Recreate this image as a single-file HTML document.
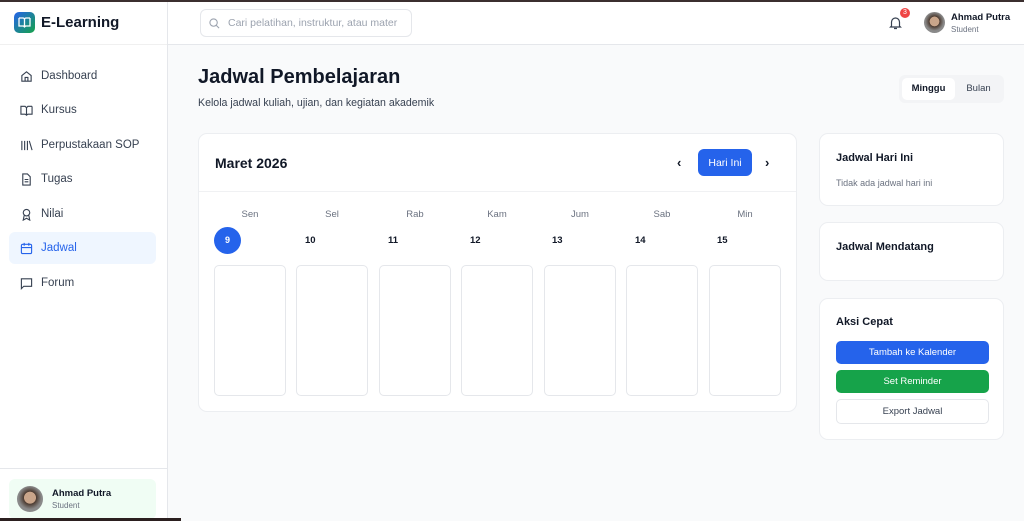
<!DOCTYPE html><html><head><style>
*{box-sizing:border-box;margin:0;padding:0}
body{width:1024px;height:521px;overflow:hidden;font-family:"Liberation Sans",sans-serif;background:#f9fafb;color:#111827;position:relative}
.top{position:absolute;left:0;top:0;width:1024px;height:2px;background:#3b2f2f}
.side{position:absolute;left:0;top:0;width:168px;height:521px;background:#fff;border-right:1px solid #e5e7eb}
.logo{height:45px;border-bottom:1px solid #f0f0f0;display:flex;align-items:center;padding-left:14px;font-weight:bold;font-size:15px}
.logo .ic{width:21px;height:21px;border-radius:5px;background:linear-gradient(135deg,#2563eb,#16a34a);margin-right:6px;display:flex;align-items:center;justify-content:center}
.nav{position:absolute;left:9px;width:147px;height:32px;display:flex;align-items:center;padding-left:11px;font-size:11.5px;color:#374151;border-radius:6px}
.nav svg{margin-right:8px}
.nav.act{background:#eff6ff;color:#2563eb}
.user{position:absolute;left:9px;top:479px;width:147px;height:40px;background:#f0fdf4;border-radius:6px;display:flex;align-items:center;padding-left:8px}
.av{width:26px;height:26px;border-radius:50%;background:radial-gradient(circle at 50% 45%,#c9a58a 30%,#4b3a30 32%,#8a8a8a 60%);margin-right:9px}
.bot{position:absolute;left:0;top:518px;width:181px;height:3px;background:#2b1f1f}
.hdr{position:absolute;left:168px;top:2px;width:856px;height:43px;background:#fff;border-bottom:1px solid #e5e7eb}
.search{position:absolute;left:32px;top:7px;width:212px;height:28px;border:1px solid #e5e7eb;border-radius:6px;font-size:10.5px;color:#9ca3af;display:flex;align-items:center;padding-left:8px}
.card{position:absolute;background:#fff;border:1px solid #eceef1;border-radius:9px}
.wd{position:absolute;top:209px;font-size:9.5px;color:#6b7280;width:72px;text-align:center}
.dn{position:absolute;top:235px;font-size:9.5px;font-weight:bold}
.cell{position:absolute;top:265px;width:72px;height:131px;border:1px solid #e5e7eb;border-radius:5px;background:#fff}
.btn{position:absolute;left:16px;width:153px;height:23px;border-radius:5px;font-size:9.5px;display:flex;align-items:center;justify-content:center;color:#fff}
</style></head><body>
<div class="side">
 <div class="logo"><div class="ic"><svg width="13" height="11" viewBox="0 0 13 11" fill="none" stroke="#fff" stroke-width="1.3"><path d="M1 1h4a1.5 1.5 0 011.5 1.5V10 M12 1H8a1.5 1.5 0 00-1.5 1.5 M1 1v8h4.5l1 1 1-1H12V1"/></svg></div>E-Learning</div>
 <div class="nav" style="top:60px"><svg width="13" height="13" viewBox="0 0 14 14" fill="none" stroke="#374151" stroke-width="1.2"><path d="M2 6l5-4 5 4v6H2z M5.5 12V8h3v4"/></svg>Dashboard</div>
 <div class="nav" style="top:94px"><svg width="13" height="13" viewBox="0 0 14 14" fill="none" stroke="#374151" stroke-width="1.2"><path d="M1 2.5h4.5L7 4v8l-1.5-1H1z M13 2.5H8.5L7 4 M13 2.5V11H8.5L7 12"/></svg>Kursus</div>
 <div class="nav" style="top:129px"><svg width="13" height="13" viewBox="0 0 14 14" fill="none" stroke="#374151" stroke-width="1.2"><path d="M2 2v10 M5 2v10 M8 2v10 M10 2l3 10"/></svg>Perpustakaan SOP</div>
 <div class="nav" style="top:163px"><svg width="13" height="13" viewBox="0 0 14 14" fill="none" stroke="#374151" stroke-width="1.2"><path d="M3 1h5l3 3v9H3z M5 7h4 M5 9.5h4"/></svg>Tugas</div>
 <div class="nav" style="top:198px"><svg width="13" height="13" viewBox="0 0 14 14" fill="none" stroke="#374151" stroke-width="1.2"><circle cx="7" cy="5" r="3.5"/><path d="M4.5 8l-1 5 3.5-2 3.5 2-1-5"/></svg>Nilai</div>
 <div class="nav act" style="top:232px"><svg width="13" height="13" viewBox="0 0 14 14" fill="none" stroke="#2563eb" stroke-width="1.2"><rect x="1.5" y="2.5" width="11" height="10" rx="1.5"/><path d="M1.5 6h11 M4.5 1v3 M9.5 1v3"/></svg>Jadwal</div>
 <div class="nav" style="top:267px"><svg width="13" height="13" viewBox="0 0 14 14" fill="none" stroke="#374151" stroke-width="1.2"><path d="M1.5 2h11v8H4l-2.5 2.5z"/></svg>Forum</div>
 <div style="position:absolute;left:0;top:468px;width:167px;border-top:1px solid #e5e7eb"></div>
 <div class="user"><div class="av"></div><div><div style="font-size:9.5px;font-weight:bold">Ahmad Putra</div><div style="font-size:8px;color:#6b7280;margin-top:2px">Student</div></div></div>
</div>
<div class="bot"></div>
<div class="hdr">
 <div class="search"><svg width="11" height="11" viewBox="0 0 12 12" fill="none" stroke="#9ca3af" stroke-width="1.2"><circle cx="5" cy="5" r="4"/><path d="M8 8l3 3"/></svg><span style="margin-left:8px">Cari pelatihan, instruktur, atau mater</span></div>
 <svg style="position:absolute;left:721px;top:14px" width="13" height="14" viewBox="0 0 13 14" fill="none" stroke="#374151" stroke-width="1.2"><path d="M2.5 10V6a4 4 0 018 0v4l1 1h-10z M5 12.5h3"/></svg>
 <div style="position:absolute;left:732px;top:6px;width:10px;height:10px;border-radius:50%;background:#ef4444;color:#fff;font-size:7px;text-align:center;line-height:10px">3</div>
 <div class="av" style="position:absolute;left:756px;top:10px;width:21px;height:21px"></div>
 <div style="position:absolute;left:783px;top:10px;font-size:9.5px;font-weight:bold">Ahmad Putra</div>
 <div style="position:absolute;left:783px;top:23px;font-size:8px;color:#6b7280">Student</div>
</div>
<div class="top"></div>
<div style="position:absolute;left:198px;top:66px;font-size:20px;font-weight:bold">Jadwal Pembelajaran</div>
<div style="position:absolute;left:198px;top:97px;font-size:10.6px;color:#374151">Kelola jadwal kuliah, ujian, dan kegiatan akademik</div>
<div style="position:absolute;left:899px;top:75px;width:105px;height:28px;background:#f3f4f6;border-radius:6px">
 <div style="position:absolute;left:3px;top:3px;width:53px;height:22px;background:#fff;border-radius:5px;font-size:9.5px;text-align:center;line-height:22px;font-weight:bold">Minggu</div>
 <div style="position:absolute;left:56px;top:3px;width:47px;height:22px;font-size:9.5px;text-align:center;line-height:22px;color:#374151">Bulan</div>
</div>
<div class="card" style="left:198px;top:133px;width:599px;height:279px">
 <div style="position:absolute;left:16px;top:21px;font-size:14px;font-weight:bold">Maret 2026</div>
 <div style="position:absolute;left:478px;top:21px;font-size:13px;font-weight:bold">‹</div>
 <div style="position:absolute;left:499px;top:15px;width:54px;height:27px;background:#2563eb;border-radius:6px;color:#fff;font-size:10.5px;display:flex;align-items:center;justify-content:center">Hari Ini</div>
 <div style="position:absolute;left:566px;top:21px;font-size:13px;font-weight:bold">›</div>
 <div style="position:absolute;left:0;top:57px;width:597px;border-top:1px solid #f0f1f3"></div>
</div>
<div class="wd" style="left:214px">Sen</div><div class="wd" style="left:296px">Sel</div><div class="wd" style="left:379px">Rab</div><div class="wd" style="left:461px">Kam</div><div class="wd" style="left:544px">Jum</div><div class="wd" style="left:626px">Sab</div><div class="wd" style="left:709px">Min</div>
<div style="position:absolute;left:214px;top:227px;width:27px;height:27px;border-radius:50%;background:#2563eb;color:#fff;font-size:9px;font-weight:bold;text-align:center;line-height:27px">9</div>
<div class="dn" style="left:305px">10</div><div class="dn" style="left:388px">11</div><div class="dn" style="left:470px">12</div><div class="dn" style="left:552px">13</div><div class="dn" style="left:635px">14</div><div class="dn" style="left:717px">15</div>
<div class="cell" style="left:214px"></div><div class="cell" style="left:296px"></div><div class="cell" style="left:379px"></div><div class="cell" style="left:461px"></div><div class="cell" style="left:544px"></div><div class="cell" style="left:626px"></div><div class="cell" style="left:709px"></div>
<div class="card" style="left:819px;top:133px;width:185px;height:73px">
 <div style="position:absolute;left:16px;top:18px;font-size:11px;font-weight:bold">Jadwal Hari Ini</div>
 <div style="position:absolute;left:16px;top:44px;font-size:9px;color:#6b7280">Tidak ada jadwal hari ini</div>
</div>
<div class="card" style="left:819px;top:222px;width:185px;height:59px">
 <div style="position:absolute;left:16px;top:18px;font-size:11px;font-weight:bold">Jadwal Mendatang</div>
</div>
<div class="card" style="left:819px;top:298px;width:185px;height:142px">
 <div style="position:absolute;left:16px;top:17px;font-size:11px;font-weight:bold">Aksi Cepat</div>
 <div class="btn" style="top:42px;background:#2563eb">Tambah ke Kalender</div>
 <div class="btn" style="top:71px;background:#16a34a">Set Reminder</div>
 <div class="btn" style="top:100px;background:#fff;border:1px solid #e5e7eb;color:#374151;height:25px">Export Jadwal</div>
</div>
</body></html>
